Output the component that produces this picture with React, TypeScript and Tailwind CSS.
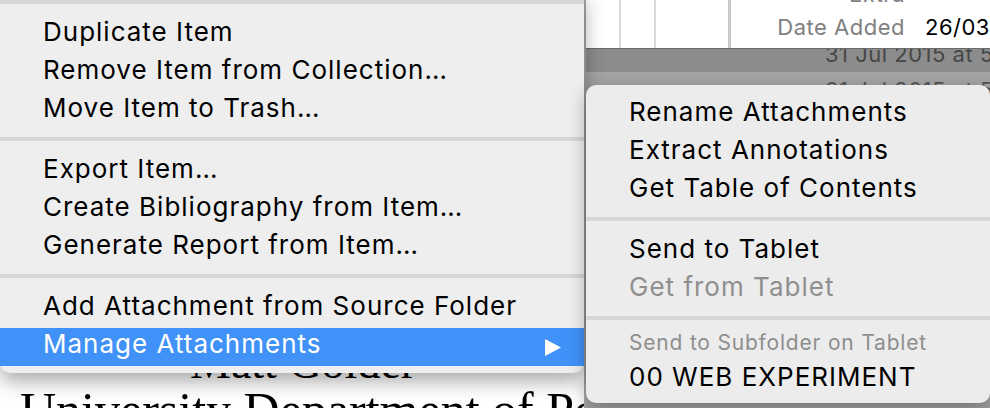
import React from 'react';

type Entry =
  | { kind: 'item'; label: string; disabled?: boolean; active?: boolean; submenu?: boolean }
  | { kind: 'sep' }
  | { kind: 'header'; label: string };

const mainMenu: Entry[] = [
  { kind: 'sep' },
  { kind: 'item', label: 'Duplicate Item' },
  { kind: 'item', label: 'Remove Item from Collection…' },
  { kind: 'item', label: 'Move Item to Trash…' },
  { kind: 'sep' },
  { kind: 'item', label: 'Export Item…' },
  { kind: 'item', label: 'Create Bibliography from Item…' },
  { kind: 'item', label: 'Generate Report from Item…' },
  { kind: 'sep' },
  { kind: 'item', label: 'Add Attachment from Source Folder' },
  { kind: 'item', label: 'Manage Attachments', active: true, submenu: true },
];

const subMenu: Entry[] = [
  { kind: 'item', label: 'Rename Attachments' },
  { kind: 'item', label: 'Extract Annotations' },
  { kind: 'item', label: 'Get Table of Contents' },
  { kind: 'sep' },
  { kind: 'item', label: 'Send to Tablet' },
  { kind: 'item', label: 'Get from Tablet', disabled: true },
  { kind: 'sep' },
  { kind: 'header', label: 'Send to Subfolder on Tablet' },
  { kind: 'item', label: '00 WEB EXPERIMENT' },
];

const MenuRows: React.FC<{ entries: Entry[]; indent: string }> = ({ entries, indent }) => (
  <>
    {entries.map((e, i) => {
      if (e.kind === 'sep') {
        return (
          <div key={i} className="h-[23px] pt-[7px]">
            <div className="h-[4px] bg-[#d6d6d6]" />
          </div>
        );
      }
      if (e.kind === 'header') {
        return (
          <div key={i} className={`h-[29px] ${indent} text-[21px] leading-[22px] tracking-[0.8px] text-[#8e8e8e] whitespace-nowrap`}>
            {e.label}
          </div>
        );
      }
      return (
        <div
          key={i}
          className={`h-[38px] ${indent} pr-[22px] flex items-start justify-between text-[26px] leading-[31px] tracking-[1px] whitespace-nowrap ${
            e.active ? 'bg-[#4092f8] text-white' : e.disabled ? 'text-[#8f8f8f]' : 'text-black'
          }`}
        >
          <span>{e.label}</span>
          {e.submenu && (
            <svg width="18" height="17" viewBox="0 0 18 17" className="mt-[11px]">
              <polygon points="1,0 17,8.5 1,17" fill="#ffffff" />
            </svg>
          )}
        </div>
      );
    })}
  </>
);

export default function App() {
  return (
    <div className="relative w-[990px] h-[408px] overflow-hidden bg-white font-[Inter,sans-serif]">
      {/* background window */}
      <div className="flex h-full">
        <div className="w-[584px] shrink-0 h-full bg-white pt-[340px] font-['Liberation_Serif',serif] text-black whitespace-nowrap overflow-hidden">
          <div className="pl-[190px] text-[46px] leading-[46px]">Matt Golder</div>
          <div className="pl-[20px] -mt-[1px] text-[50px] leading-[50px]">University Department of Political Science</div>
        </div>
        <div className="w-[2px] shrink-0 h-full bg-[#a9a9a9]" />
        <div className="flex-1 min-w-0 h-full flex flex-col overflow-hidden">
          <div className="h-[48px] shrink-0 flex bg-white overflow-hidden">
            <div className="w-[33px] shrink-0" />
            <div className="w-[2px] shrink-0 bg-[#dadada]" />
            <div className="w-[33px] shrink-0" />
            <div className="w-[2px] shrink-0 bg-[#dadada]" />
            <div className="w-[72px] shrink-0" />
            <div className="w-[3px] shrink-0 bg-[#c9c9c9]" />
            <div className="flex-1 min-w-0 -mt-[19px] text-[22px] leading-[27px] tracking-[0.5px] whitespace-nowrap">
              <div className="h-[33px] flex">
                <span className="w-[174px] shrink-0 text-right text-[#808080]">Extra</span>
              </div>
              <div className="h-[33px] flex">
                <span className="w-[174px] shrink-0 text-right text-[#808080]">Date Added</span>
                <span className="ml-[20px] text-black">26/03/2016</span>
              </div>
            </div>
          </div>
          <div className="h-[1px] shrink-0 bg-[#6b6b6b]" />
          <div className="h-[23px] shrink-0 bg-[#8c8c8c] overflow-hidden">
            <div className="-mt-[8px] pl-[239px] text-[22px] leading-[27px] tracking-[0.5px] text-[#474747] whitespace-nowrap">
              31 Jul 2015 at 5:12
            </div>
          </div>
          <div className="flex-1 bg-[#a4a4a4] overflow-hidden">
            <div className="mt-[5px] pl-[239px] text-[22px] leading-[27px] tracking-[0.5px] text-[#555555] whitespace-nowrap">
              31 Jul 2015 at 5:12
            </div>
          </div>
        </div>
      </div>

      {/* context menu */}
      <div className="absolute left-0 top-[-7px] w-[584px] pb-[7px] bg-[#eeeeee] rounded-b-[10px] shadow-[0_8px_20px_rgba(0,0,0,0.35)]">
        <MenuRows entries={mainMenu} indent="pl-[43px]" />
      </div>

      {/* submenu */}
      <div className="absolute left-[586px] top-[85px] w-[404px] pt-[11px] pb-[4px] bg-[#ececec] rounded-[10px] shadow-[0_6px_18px_rgba(0,0,0,0.3)]">
        <MenuRows entries={subMenu} indent="pl-[43px]" />
      </div>
    </div>
  );
}
